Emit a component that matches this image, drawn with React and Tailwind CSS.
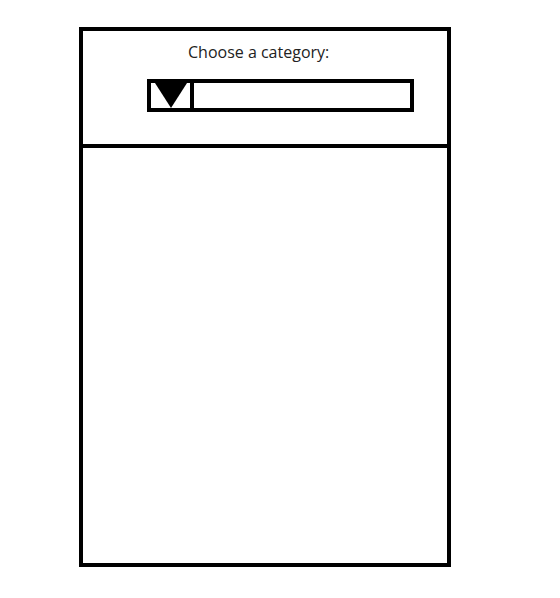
export default function App() {
    return (
        <div className="min-h-[598px] bg-white pl-[79px] pt-[27px]" style={{ fontFamily: '"Open Sans", "Noto Sans", sans-serif' }}>
            <div className="w-[372px] h-[540px] border-4 border-black flex flex-col">
                <div className="h-[117px] border-b-4 border-black">
                    <div className="pt-[11px] pl-[105px] text-[16px] leading-[20px] text-[#222]">Choose a category:</div>
                    <div className="mt-[17px] ml-[64px] w-[267px] h-[33px] border-4 border-black flex">
                        <div className="w-[43px] h-full border-r-4 border-black flex items-center justify-center">
                            <svg width="32" height="25" viewBox="0 0 32 25">
                                <path d="M0 0 L32 0 L16 25 Z" fill="#000" />
                            </svg>
                        </div>
                        <div className="flex-1" />
                    </div>
                </div>
                <div className="flex-1" />
            </div>
        </div>
    );
}
